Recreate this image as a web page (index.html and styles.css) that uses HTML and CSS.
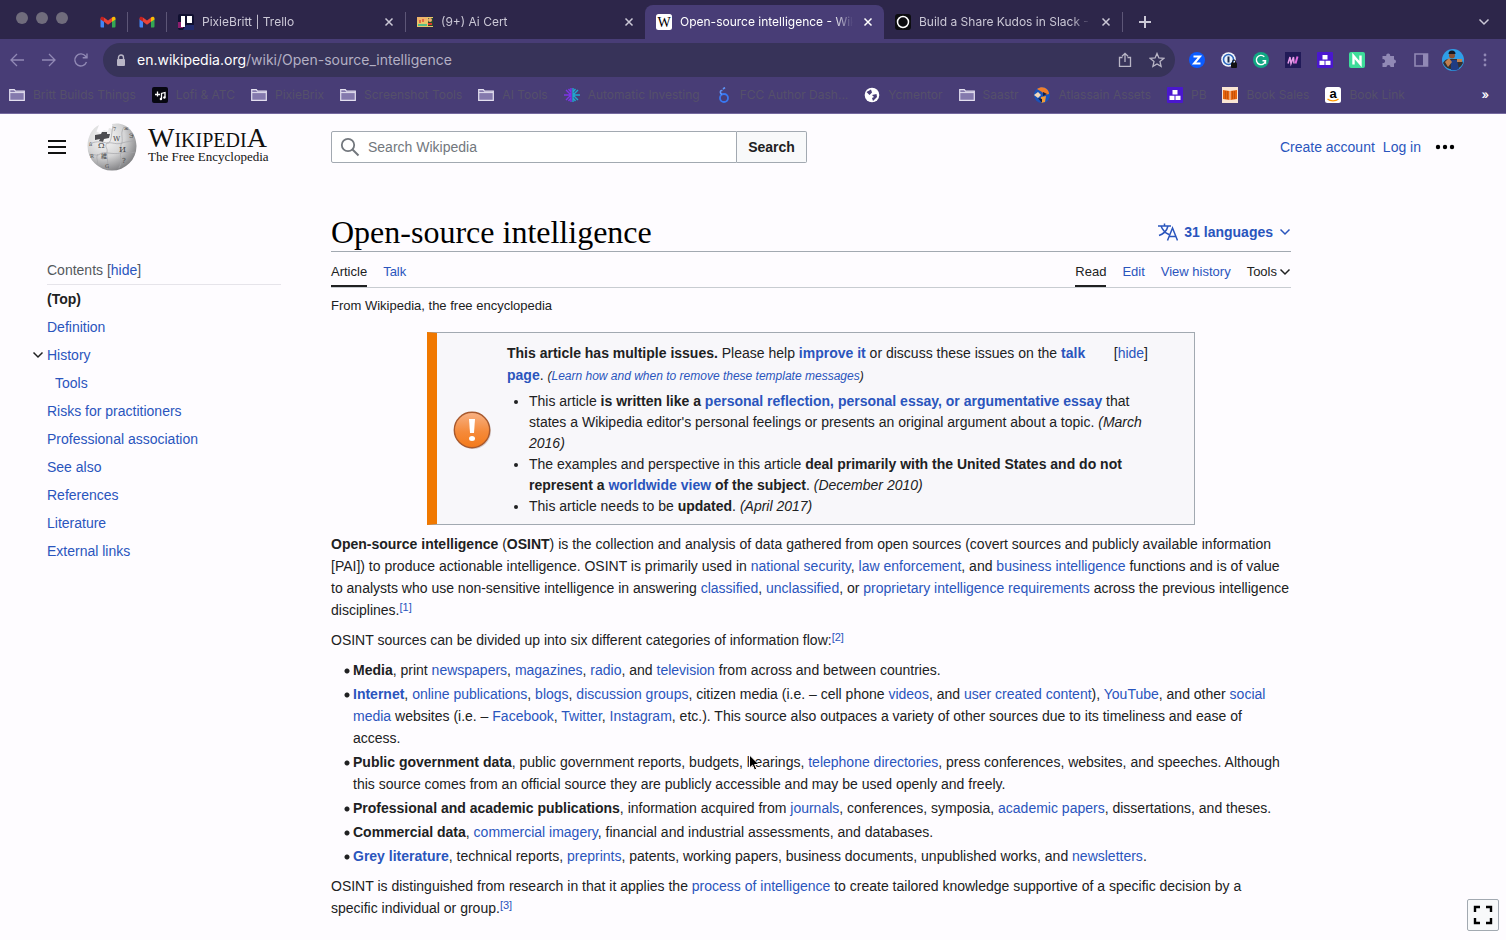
FILE: index.html
```html
<!DOCTYPE html>
<html lang="en">
  <head>
    <meta charset="UTF-8" />
    <meta name="viewport" content="width=device-width, initial-scale=1.0" />
    <title>Open-source intelligence - Wikipedia</title>
    <link rel="stylesheet" href="styles.css">
  </head>
  <body>
    <!-- shared icons -->
    <svg class="defs" width="0" height="0" aria-hidden="true">
      <symbol id="folder" viewBox="0 0 16 16">
        <path d="M.7 13V2.6h4.6l1.2 1.6h8.8V13.3H.7z" fill="#8479ad" stroke="#e4e0f0" stroke-width="1.2"/>
        <path d="M1 5.6h14" stroke="#e4e0f0"/>
      </symbol>
      <symbol id="gmail" viewBox="0 0 16 16">
        <path d="M.5 4.5 4 7v6.5H1.5a1 1 0 0 1-1-1z" fill="#4285f4"/>
        <path d="M15.500 4.500 12 7v6.500h2.500a1 1 0 0 0 1-1z" fill="#34a853"/>
        <path d="M4 3.500 8 6.600l4-3.100v4.200l-4 3-4-3z" fill="#ea4335"/>
        <path d="M12 3.500c1.500-1.400 3.500-.8 3.500 1v1L12 7.800z" fill="#fbbc04"/>
        <path d="M4 3.500C2.500 2.100.5 2.700.5 4.500v1L4 7.800z" fill="#c5221f"/>
      </symbol>
      <symbol id="close" viewBox="0 0 16 16">
        <path d="m4.500 4.500 7 7m0-7-7 7" fill="none" stroke="currentColor" stroke-width="1.500"/>
      </symbol>
      <symbol id="blocks" viewBox="0 0 16 16">
        <rect width="16" height="16" rx="1" fill="#4a17cf"/>
        <path d="M5.500 3h5v4.500h-5zM2.500 8.700h5V13h-5zM8.500 8.700h5V13h-5z" fill="#fff"/>
      </symbol>
      <symbol id="chevron" viewBox="0 0 12 12">
        <path d="m1.500 3.500 4.500 4.500 4.500-4.500" fill="none" stroke="currentColor" stroke-width="1.500"/>
      </symbol>
    </svg>

    <div class="browser">
      <div class="tab-strip">
        <div class="lights"><span></span><span></span><span></span></div>
        <div class="tab pinned"><svg class="icon"><use href="#gmail"/></svg><i class="divider"></i></div>
        <div class="tab pinned"><svg class="icon"><use href="#gmail"/></svg><i class="divider"></i></div>
        <div class="tab">
          <svg class="icon" viewBox="0 0 16 16"><rect width="16" height="16" rx="2" fill="#101030"/><path d="M0 8h5v6H0z" fill="#8d1d6d"/><path d="M8 11h8v5H5z" fill="#222b6c"/><path d="M3 2h4v11H3zM9 2h5v7H9z" fill="#fff"/></svg>
          <span class="tab-title">PixieBritt | Trello</span>
          <button class="tab-close" aria-label="Close tab"><svg class="icon"><use href="#close"/></svg></button>
          <i class="divider"></i>
        </div>
        <div class="tab">
          <svg class="icon" viewBox="0 0 16 16"><path d="M0 3h16v10H0z" fill="#e8c668"/><path d="M0 3h10v4H0z" fill="#f0b56a"/><path d="M11 4h5v8h-5z" fill="#274b2c"/><path d="M1 10h9v2H1z" fill="#54bd86"/><path d="M2 6h2v3H2zM5 5h2v3H5z" fill="#e66a45"/><circle cx="13" cy="6" r="2" fill="#f0b070"/><path d="M11 9h4v2h-4z" fill="#d8352d"/></svg>
          <span class="tab-title">(9+) Ai Cert</span>
          <button class="tab-close" aria-label="Close tab"><svg class="icon"><use href="#close"/></svg></button>
        </div>
        <div class="tab active">
          <svg class="icon" viewBox="0 0 16 16"><rect width="16" height="16" rx="2.500" fill="#fff"/><text x="8" y="13" text-anchor="middle" font-family="Liberation Serif, serif" font-size="14">W</text></svg>
          <span class="tab-title">Open-source intelligence - Wikipedia</span>
          <button class="tab-close" aria-label="Close tab"><svg class="icon"><use href="#close"/></svg></button>
        </div>
        <div class="tab">
          <svg class="icon" viewBox="0 0 16 16"><rect width="16" height="16" rx="3" fill="#0c0c10"/><circle cx="8" cy="8" r="5.500" fill="none" stroke="#fff" stroke-width="1.500"/></svg>
          <span class="tab-title">Build a Share Kudos in Slack - PixieBrix</span>
          <button class="tab-close" aria-label="Close tab"><svg class="icon"><use href="#close"/></svg></button>
          <i class="divider"></i>
        </div>
        <button class="strip-btn" aria-label="New tab"><svg class="icon" viewBox="0 0 16 16"><path d="M8 2v12M2 8h12" stroke="currentColor" stroke-width="2"/></svg></button>
        <button class="strip-btn last" aria-label="Search tabs"><svg class="icon small"><use href="#chevron"/></svg></button>
      </div>

      <div class="toolbar">
        <button class="tool dim" aria-label="Back"><svg class="icon" viewBox="0 0 16 16"><path d="M15 8H2m6-6L2 8l6 6" fill="none" stroke="currentColor" stroke-width="1.300"/></svg></button>
        <button class="tool dim" aria-label="Forward"><svg class="icon" viewBox="0 0 16 16"><path d="M1 8h13M8 2l6 6-6 6" fill="none" stroke="currentColor" stroke-width="1.300"/></svg></button>
        <button class="tool dim" aria-label="Reload"><svg class="icon" viewBox="0 0 16 16"><path d="M13.500 10A6 6 0 1 1 12.600 4.200L14 5.600M14 1.500v4.300H9.700" fill="none" stroke="currentColor" stroke-width="1.400"/></svg></button>
        <div class="omnibox">
          <svg class="lock" viewBox="0 0 10 12"><path d="M2.500 6V3.500a2.500 2.500 0 0 1 5 0V6" fill="none" stroke="#b9b6c6" stroke-width="1.400"/><rect x="1" y="5" width="8" height="7" rx="1" fill="#b9b6c6"/></svg>
          <div class="url" role="textbox" aria-label="Address" contenteditable="true" spellcheck="false"><b>en.wikipedia.org</b>/wiki/Open-source_intelligence</div>
          <button class="tool" aria-label="Share"><svg class="icon" viewBox="0 0 16 16"><path d="M5.500 5.500h-3v8.800h11V5.500h-3M8 10V1.500M5 4.300l3-3 3 3" fill="none" stroke="currentColor" stroke-width="1.300"/></svg></button>
          <button class="tool" aria-label="Bookmark"><svg class="icon" viewBox="0 0 16 16"><path d="m8 1.500 1.900 4.500 4.800.4-3.700 3.200 1.100 4.800L8 11.900l-4.100 2.500L5 9.600 1.300 6.400l4.800-.4z" fill="none" stroke="currentColor" stroke-width="1.300"/></svg></button>
        </div>
        <button class="tool" aria-label="Zoom"><svg class="icon" viewBox="0 0 16 16"><circle cx="8" cy="8" r="8" fill="#0b5cff"/><path d="M4.500 4.500h6.500L5 11.500h6.500" fill="none" stroke="#fff" stroke-width="2"/></svg></button>
        <button class="tool" aria-label="1Password"><svg class="icon" viewBox="0 0 16 16"><circle cx="7.500" cy="7.500" r="7.300" fill="#f4f6fb"/><circle cx="7.500" cy="7.500" r="5" fill="#e8f0fb" stroke="#2c66bd" stroke-width="1.600"/><path d="M7.500 4.500v6" stroke="#1b2b4c" stroke-width="2"/><rect x="10" y="10.500" width="6" height="5.500" rx="1" fill="#111"/><path d="M11.500 11V9.500a1.500 1.500 0 0 1 3 0V11" fill="none" stroke="#111"/></svg></button>
        <button class="tool" aria-label="Grammarly"><svg class="icon" viewBox="0 0 16 16"><circle cx="8" cy="8" r="8" fill="#11a683"/><path d="M11.300 4.800a4.600 4.600 0 1 0 1.200 4H9.500M12.500 8.800v3" fill="none" stroke="#fff" stroke-width="1.400"/></svg></button>
        <button class="tool" aria-label="Mem"><svg class="icon" viewBox="0 0 16 16"><rect width="16" height="16" fill="#211a58"/><path d="M3 11.500 5 5l1 6.500L8.500 5l.5 6.500" fill="none" stroke="#e79be8" stroke-width="1.500"/><path d="M10.500 11.500 12.500 4.500" stroke="#e26ae0" stroke-width="2"/></svg></button>
        <button class="tool" aria-label="PixieBrix"><svg class="icon"><use href="#blocks"/></svg></button>
        <button class="tool" aria-label="Nimbus"><svg class="icon" viewBox="0 0 16 16"><rect width="16" height="16" rx="2" fill="#3ddc9a"/><path d="M4.500 12.500V4l7 8V3.500" fill="none" stroke="#fff" stroke-width="2.400"/></svg></button>
        <button class="tool dim" aria-label="Extensions"><svg class="icon" viewBox="0 0 16 16"><path d="M1.500 4h3.800a2 2 0 1 1 3.800 0H13v3.500a2 2 0 1 1 0 4V15H9.500a2 2 0 1 0-4 0h-4v-4a2 2 0 1 0 0-3.800z" fill="currentColor"/></svg></button>
        <button class="tool dim" aria-label="Side panel"><svg class="icon" viewBox="0 0 16 16"><path d="M2 2h12.500v12H2z" fill="none" stroke="currentColor" stroke-width="1.600"/><path d="M10 2h4v12h-4z" fill="currentColor"/></svg></button>
        <button class="tool" aria-label="Profile"><svg class="avatar" viewBox="0 0 22 22"><circle cx="11" cy="11" r="11" fill="#2f9ee8"/><path d="M1 14c2-4 5-4 7-4h5c4 0 7 1 8 4a11 11 0 0 1-20 0z" fill="#35302f"/><path d="M9 11h6l2 9a11 11 0 0 1-8 1z" fill="#203d83"/><path d="m3 13 4-4 3 4-4 5zM15 10h5v3h-5z" fill="#c08050"/><circle cx="10" cy="6.500" r="3" fill="#8a5234"/><path d="M6.500 5a3.500 3.500 0 0 1 7 0z" fill="#151923"/></svg></button>
        <button class="tool dim" aria-label="Menu"><svg class="icon" viewBox="0 0 16 16" fill="currentColor"><circle cx="8" cy="3" r="1.400"/><circle cx="8" cy="8" r="1.400"/><circle cx="8" cy="13" r="1.400"/></svg></button>
      </div>

      <nav class="bookmarks" aria-label="Bookmarks">
        <a href="#"><svg class="icon"><use href="#folder"/></svg>Britt Builds Things</a>
        <a href="#"><svg class="icon" viewBox="0 0 16 16"><rect width="16" height="16" rx="2" fill="#070710"/><path d="M3 7.500h5M5.500 4.500v5M9.500 12V6.500L13 5.500v5" fill="none" stroke="#fff" stroke-width="1.300"/><circle cx="8.900" cy="12" r="1.200" fill="#fff"/><circle cx="12.400" cy="10.500" r="1.200" fill="#fff"/></svg>Lofi &amp; ATC</a>
        <a href="#"><svg class="icon"><use href="#folder"/></svg>PixieBrix</a>
        <a href="#"><svg class="icon"><use href="#folder"/></svg>Screenshot Tools</a>
        <a href="#"><svg class="icon"><use href="#folder"/></svg>AI Tools</a>
        <a href="#"><svg class="icon" viewBox="0 0 16 16"><path d="M7 1v14M2 3l5 5-5 5M0 8h7M4.500 2 7 5M4.500 14 7 11" fill="none" stroke="#7c35e8" stroke-width="1.400"/><path d="M9 1v14M14 3 9 8l5 5M16 8H9M11.500 2 9 5M11.500 14 9 11" fill="none" stroke="#20a6cf" stroke-width="1.400"/></svg>Automatic Investing</a>
        <a href="#"><svg class="icon" viewBox="0 0 16 16"><circle cx="8" cy="11" r="4" fill="none" stroke="#3978f0" stroke-width="1.800"/><path d="M6 7.500C3.500 6 4 3 6.500 3.500M7 2l2-1.500" fill="none" stroke="#5e93f5" stroke-width="1.600"/></svg>FCC Author Dash...</a>
        <a href="#"><svg class="icon" viewBox="0 0 16 16"><circle cx="8" cy="8" r="7.300" fill="#fff"/><path d="M2.500 5 7 2.500l1 3L5.500 8zM8 8l4.500-1 .5 3-4 4-1-3 2-1z" fill="#483d76"/></svg>Ycmentor</a>
        <a href="#"><svg class="icon"><use href="#folder"/></svg>Saastr</a>
        <a href="#"><svg class="icon" viewBox="0 0 16 16"><circle cx="8" cy="8" r="8" fill="#1a52b8"/><path d="M3 2c6-4 12 0 12 5l-4 1-3-3z" fill="#ef7d2b"/><path d="m0 8 4-3 3 3-3 3z" fill="#f4d9ba"/><path d="m7 10 5-1-1 6-4 1z" fill="#f39a37"/><path d="m4 11 4 1v4zM9 5l4 2-4 2z" fill="#111d42"/></svg>Atlassain Assets</a>
        <a href="#"><svg class="icon"><use href="#blocks"/></svg>PB</a>
        <a href="#"><svg class="icon" viewBox="0 0 16 16"><rect width="16" height="16" fill="#fae6d4"/><path d="m1 3 6.500 1v9L1 12zM15 3 8.500 4v9l6.500-1z" fill="#e8640f"/><path d="M3.500 4v8M5.500 4v8M10.500 4v8M12.500 4v8" stroke="#b84a08" stroke-width=".7"/></svg>Book Sales</a>
        <a href="#"><svg class="icon" viewBox="0 0 16 16"><rect width="16" height="16" rx="2.500" fill="#fff"/><text x="8" y="11" text-anchor="middle" font-family="Liberation Sans, sans-serif" font-size="13" font-weight="700">a</text><path d="M2.500 12c3 2.600 8 2.600 11 0" fill="none" stroke="#f90" stroke-width="1.300"/></svg>Book Link</a>
        <button class="more" aria-label="More bookmarks">»</button>
      </nav>
    </div>

    <div class="page">
      <header class="site-header">
        <div class="brand">
          <button class="menu-btn" aria-label="Main menu"><svg width="20" height="20" viewBox="0 0 20 20"><path d="M1 4h18M1 10h18M1 16h18" stroke="#111" stroke-width="2"/></svg></button>
          <a class="logo" href="#" aria-label="Wikipedia, The Free Encyclopedia">
            <svg class="globe" width="50" height="50" viewBox="0 0 50 50">
              <defs>
                <radialGradient id="ball" cx=".35" cy=".3" r=".75">
                  <stop offset="0" stop-color="#fafafa"/>
                  <stop offset=".55" stop-color="#d4d4d5"/>
                  <stop offset="1" stop-color="#7d7d80"/>
                </radialGradient>
              </defs>
              <path d="M12 3 9.500 9.500 13 11l4-3 4 1 1-3 4 1-1-5c13-3 24 7 24.500 22A24.500 24.500 0 1 1 .5 24C.8 14 5 6.500 12 3z" fill="url(#ball)"/>
              <path d="m8 13 6-1 1-2 5 0v2h3l-1 4-5 1-1 3-4-1 1-2-5 1z" fill="#4c4c50"/>
              <path d="M5 21c5-2 10-1 15 0s4-9 6-17M20 21c6-1 9 2 15 0s9-1 13-3M20 21c-3 4 1 5 0 9s2 9 0 17M2 33c5-2 7 2 11-1s14 1 20-1 10 1 15-1M35 21c-3 3 1 7-1 10s2 8-2 15M35 21c1-7-2-10 2-16M11 32c-3 5 1 6-1 11" fill="none" stroke="#a5a5a9" stroke-width=".7"/>
              <g font-family="DejaVu Serif, serif" font-size="8" fill="#444">
                <text x="11" y="26">Ω</text><text x="26" y="19" font-size="7">W</text><text x="32" y="30">И</text><text x="14" y="36" font-family="Noto Sans CJK JP, sans-serif" font-size="6">維</text><text x="35" y="41" font-size="7">?</text><text x="42" y="16" font-size="6">Э</text><text x="2" y="24" font-size="5">й</text><text x="18" y="46" font-size="5">G</text><text x="26" y="9" font-size="5">7</text><text x="37" y="8" font-size="5">ж</text><text x="3" y="36" font-size="5">R</text>
              </g>
            </svg>
            <span class="logo-text">
              <span class="wordmark">WikipediA</span>
              <span class="tagline">The Free Encyclopedia</span>
            </span>
          </a>
        </div>
        <div class="header-end">
          <form class="search">
            <label class="search-box">
              <svg width="20" height="20" viewBox="0 0 20 20"><circle cx="8" cy="8" r="6.200" fill="none" stroke="#72777d" stroke-width="1.800"/><path d="m12.500 12.500 6 6" stroke="#72777d" stroke-width="2"/></svg>
              <input type="search" placeholder="Search Wikipedia" aria-label="Search Wikipedia">
            </label>
            <button type="button">Search</button>
          </form>
          <nav class="user-links">
            <a href="#">Create account</a>
            <a href="#">Log in</a>
            <button aria-label="Personal tools"><svg width="20" height="20" viewBox="0 0 20 20"><circle cx="3" cy="10" r="2.200"/><circle cx="10" cy="10" r="2.200"/><circle cx="17" cy="10" r="2.200"/></svg></button>
          </nav>
        </div>
      </header>

      <div class="columns">
        <nav class="toc" aria-label="Contents">
          <div class="toc-head">Contents <span class="toggle">[<a href="#">hide</a>]</span></div>
          <ul>
            <li><a class="current" href="#">(Top)</a></li>
            <li><a href="#">Definition</a></li>
            <li class="open">
              <button aria-label="Toggle History subsection"><svg class="icon small"><use href="#chevron"/></svg></button>
              <a href="#">History</a>
              <ul><li><a href="#">Tools</a></li></ul>
            </li>
            <li><a href="#">Risks for practitioners</a></li>
            <li><a href="#">Professional association</a></li>
            <li><a href="#">See also</a></li>
            <li><a href="#">References</a></li>
            <li><a href="#">Literature</a></li>
            <li><a href="#">External links</a></li>
          </ul>
        </nav>

        <main>
          <div class="title-row">
            <h1>Open-source intelligence</h1>
            <button class="languages">
              <svg width="20" height="20" viewBox="0 0 20 20"><path d="M0 4h13M6.500 1.500V4M3 4c1.500 4 4.500 7 8 8.500M10 4c-1 4-4.500 8-9 9.500M9.500 18.500 14.500 6l5 12.500M11.300 14.500h6.400" fill="none" stroke="currentColor" stroke-width="1.500"/></svg>
              31 languages
              <svg class="icon small"><use href="#chevron"/></svg>
            </button>
          </div>
          <div class="page-tabs">
            <a class="selected" href="#">Article</a>
            <a href="#">Talk</a>
            <a class="selected push" href="#">Read</a>
            <a href="#">Edit</a>
            <a href="#">View history</a>
            <button>Tools <svg class="icon small"><use href="#chevron"/></svg></button>
          </div>
          <div class="subtitle">From Wikipedia, the free encyclopedia</div>

          <div class="ambox">
            <svg width="40" height="40" viewBox="0 0 40 40">
              <defs>
                <linearGradient id="warn" x1="0" y1="0" x2="0" y2="1">
                  <stop offset="0" stop-color="#f8b285"/>
                  <stop offset=".55" stop-color="#f58a3a"/>
                  <stop offset="1" stop-color="#f47a1a"/>
                </linearGradient>
              </defs>
              <circle cx="21" cy="21" r="18" fill="#d5ced0"/>
              <circle cx="20" cy="20" r="17.700" fill="url(#warn)" stroke="#a8592d" stroke-width="1.400"/>
              <path d="M17 9h6l-1 14h-4z" fill="#fff"/>
              <ellipse cx="20" cy="28.500" rx="3" ry="2.500" fill="#fff"/>
            </svg>
            <div class="ambox-text">
              <span class="ambox-hide">[<a href="#">hide</a>]</span>
              <b>This article has multiple issues.</b> Please help <b><a href="#">improve it</a></b> or discuss these issues on the <b><a href="#">talk page</a></b>. <small>(<a href="#">Learn how and when to remove these template messages</a>)</small>
              <ul>
                <li>This article <b>is written like a <a href="#">personal reflection, personal essay, or argumentative essay</a></b> that states a Wikipedia editor's personal feelings or presents an original argument about a topic. <i>(March 2016)</i></li>
                <li>The examples and perspective in this article <b>deal primarily with the United States and do not represent a <a href="#">worldwide view</a> of the subject</b>. <i>(December 2010)</i></li>
                <li>This article needs to be <b>updated</b>. <i>(April 2017)</i></li>
              </ul>
            </div>
          </div>

          <div class="article">
            <p><b>Open-source intelligence</b> (<b>OSINT</b>) is the collection and analysis of data gathered from open sources (covert sources and publicly available information [PAI]) to produce actionable intelligence. OSINT is primarily used in <a href="#">national security</a>, <a href="#">law enforcement</a>, and <a href="#">business intelligence</a> functions and is of value to analysts who use non-sensitive intelligence in answering <a href="#">classified</a>, <a href="#">unclassified</a>, or <a href="#">proprietary intelligence requirements</a> across the previous intelligence disciplines.<sup><a href="#">[1]</a></sup></p>
            <p>OSINT sources can be divided up into six different categories of information flow:<sup><a href="#">[2]</a></sup></p>
            <ul>
              <li><b>Media</b>, print <a href="#">newspapers</a>, <a href="#">magazines</a>, <a href="#">radio</a>, and <a href="#">television</a> from across and between countries.</li>
              <li><b><a href="#">Internet</a></b>, <a href="#">online publications</a>, <a href="#">blogs</a>, <a href="#">discussion groups</a>, citizen media (i.e. – cell phone <a href="#">videos</a>, and <a href="#">user created content</a>), <a href="#">YouTube</a>, and other <a href="#">social media</a> websites (i.e. – <a href="#">Facebook</a>, <a href="#">Twitter</a>, <a href="#">Instagram</a>, etc.). This source also outpaces a variety of other sources due to its timeliness and ease of access.</li>
              <li><b>Public government data</b>, public government reports, budgets, hearings, <a href="#">telephone directories</a>, press conferences, websites, and speeches. Although this source comes from an official source they are publicly accessible and may be used openly and freely.</li>
              <li><b>Professional and academic publications</b>, information acquired from <a href="#">journals</a>, conferences, symposia, <a href="#">academic papers</a>, dissertations, and theses.</li>
              <li><b>Commercial data</b>, <a href="#">commercial imagery</a>, financial and industrial assessments, and databases.</li>
              <li><b><a href="#">Grey literature</a></b>, technical reports, <a href="#">preprints</a>, patents, working papers, business documents, unpublished works, and <a href="#">newsletters</a>.</li>
            </ul>
            <p>OSINT is distinguished from research in that it applies the <a href="#">process of intelligence</a> to create tailored knowledge supportive of a specific decision by a specific individual or group.<sup><a href="#">[3]</a></sup></p>
          </div>
        </main>
      </div>
    </div>

    <button class="width-toggle" aria-label="Toggle limited content width"><svg width="20" height="20" viewBox="0 0 20 20"><path d="M2 7V2h5M13 2h5v5M18 13v5h-5M7 18H2v-5" fill="none" stroke="#000" stroke-width="2.400"/></svg></button>
    <svg class="pointer" width="13" height="18" viewBox="0 0 13 18" aria-hidden="true"><path d="M1.500 1v13l3-2.800 2 4.800 2.200-1-2-4.500H11z" fill="#000" stroke="#fff"/></svg>
  </body>
</html>
```

FILE: styles.css
```css
* {
  box-sizing: border-box;
}
body {
  margin: 0;
  background: #fefcff;
  color: #202122;
  font-family: "Liberation Sans", Arial, sans-serif;
  font-size: 14px;
  line-height: 22px;
}
a {
  color: #2a55bd;
  text-decoration: none;
}
button {
  display: flex;
  align-items: center;
  justify-content: center;
  border: none;
  padding: 0;
  background: none;
  color: inherit;
  font: inherit;
  cursor: pointer;
}
ul {
  margin: 0;
  padding: 0;
}
svg {
  flex: none;
}
.defs {
  position: absolute;
}
.icon {
  width: 16px;
  height: 16px;
}
.icon.small {
  width: 12px;
  height: 12px;
}

/* browser window */
.browser {
  background: #483d76;
  border-bottom: 1px solid #75699f;
  font-family: Inter, Roboto, sans-serif;
  font-size: 12px;
}
.tab-strip {
  display: flex;
  height: 39px;
  padding-top: 5px;
  background: #2d264a;
  color: #cbc8d6;
}
.lights {
  display: flex;
  gap: 8px;
  width: 89px;
  padding: 7px 0 0 16px;
}
.lights span {
  width: 12px;
  height: 12px;
  border-radius: 50%;
  background: #706c7c;
}
.tab {
  display: flex;
  align-items: center;
  flex: 0 1 239px;
  min-width: 0;
  padding-left: 11px;
  border-radius: 8px 8px 0 0;
}
.tab.pinned {
  flex: none;
  width: 39px;
}
.tab.active {
  background: #483d76;
  color: #fff;
}
.tab-title {
  flex: 1;
  margin: 0 7px 0 8px;
  overflow: hidden;
  white-space: nowrap;
  mask-image: linear-gradient(to left, transparent, #000 20px);
}
.tab-close {
  margin-right: 8px;
}
.divider {
  width: 1px;
  height: 20px;
  margin-left: auto;
  background: #5d5677;
}
.strip-btn {
  width: 44px;
}
.strip-btn.last {
  margin-left: auto;
}
.toolbar {
  display: flex;
  align-items: center;
  height: 42px;
  padding: 0 5px 0 1px;
  color: #b9b6c6;
}
.tool {
  flex: none;
  width: 32px;
  height: 32px;
}
.tool.dim {
  color: #9189b5;
}
.avatar {
  width: 22px;
  height: 22px;
}
.omnibox {
  display: flex;
  align-items: center;
  flex: 1;
  height: 34px;
  margin: 0 6px;
  padding: 0 2px 0 13px;
  border-radius: 17px;
  background: #373359;
}
.lock {
  width: 10px;
  height: 12px;
}
.url {
  flex: 1;
  margin-left: 11px;
  color: #b3b0c4;
  font-size: 14px;
}
.url b {
  color: #fff;
  font-weight: 400;
}
.bookmarks {
  display: flex;
  align-items: center;
  gap: 16px;
  height: 32px;
  padding: 0 17px 4px 9px;
  white-space: nowrap;
}
.bookmarks a {
  display: flex;
  align-items: center;
  gap: 8px;
  color: #55506a;
}
.more {
  margin-left: auto;
  color: #fff;
  font-weight: 600;
}

/* site header */
.page {
  padding: 0 51px 0 47px;
}
.site-header,
.columns {
  display: grid;
  grid-template-columns: 234px minmax(0, 1fr);
  column-gap: 50px;
}
.site-header {
  align-items: center;
  height: 66px;
}
.brand,
.logo,
.header-end,
.user-links {
  display: flex;
  align-items: center;
}
.brand {
  gap: 20px;
}
.logo {
  gap: 11px;
  color: #111;
  font-family: "Liberation Serif", serif;
}
.logo-text {
  display: flex;
  flex-direction: column;
  padding-bottom: 4px;
}
.wordmark {
  font-size: 28px;
  font-variant: small-caps;
  line-height: 24px;
}
.tagline {
  font-size: 13px;
  line-height: 14px;
}
.header-end {
  justify-content: space-between;
}
.search {
  display: flex;
  flex: 0 1 476px;
  height: 32px;
}
.search-box {
  display: flex;
  align-items: center;
  flex: 1;
  gap: 8px;
  padding-left: 8px;
  border: 1px solid #a2a9b1;
  border-radius: 2px 0 0 2px;
  background: #fff;
}
.search input {
  flex: 1;
  min-width: 0;
  border: none;
  padding: 0;
  outline: none;
  background: none;
  font: inherit;
}
.search input::placeholder {
  color: #72777d;
}
.search button {
  width: 70px;
  border: 1px solid #a2a9b1;
  border-left: none;
  border-radius: 0 2px 2px 0;
  background: #f8f9fa;
  font-weight: 700;
}
.user-links {
  gap: 8px;
}
.user-links button {
  margin-left: 6px;
}

/* contents */
.toc {
  padding-top: 79px;
}
.toc-head {
  padding-bottom: 3px;
  border-bottom: 1px solid #e6e4ea;
  color: #54595d;
}
.toc ul {
  list-style: none;
}
.toc li {
  position: relative;
  line-height: 28px;
}
.toc li li {
  padding-left: 8px;
}
.toc .current {
  color: #202122;
  font-weight: 700;
}
.toc .open button {
  position: absolute;
  top: 8px;
  left: -15px;
}

/* article */
main {
  max-width: 960px;
  padding-top: 32px;
}
.title-row {
  display: flex;
  justify-content: space-between;
  height: 40px;
  border-bottom: 1px solid #a2a9b1;
}
h1 {
  margin: 0;
  color: #000;
  font-family: "Liberation Serif", serif;
  font-size: 32px;
  font-weight: 400;
  line-height: 40px;
}
.languages {
  gap: 6px;
  color: #2a55bd;
  font-weight: 700;
}
.page-tabs {
  display: flex;
  gap: 16px;
  height: 36px;
  border-bottom: 1px solid #c8ccd1;
  font-size: 13px;
}
.page-tabs a,
.page-tabs button {
  padding-top: 9px;
}
.page-tabs .selected {
  border-bottom: 2px solid #202122;
  color: #202122;
}
.page-tabs .push {
  margin-left: auto;
}
.page-tabs button {
  align-items: flex-start;
  gap: 2px;
}
.page-tabs svg {
  margin-top: 5px;
}
.subtitle {
  margin: 8px 0 16px;
  font-size: 13px;
  line-height: 20px;
}
.ambox {
  display: flex;
  align-items: center;
  gap: 15px;
  margin: 0 10%;
  padding: 9px 46px 7px 15px;
  border: 1px solid #a2a9b1;
  border-left: 10px solid #f07800;
  background: #f8f7fa;
}
.ambox-text {
  flex: 1;
}
.ambox-hide {
  float: right;
  margin-left: 24px;
}
.ambox small {
  font-size: 12px;
  font-style: italic;
}
.ambox ul {
  margin: 4px 0 0 22px;
  line-height: 21px;
}
.article p {
  margin: 8px 0;
}
.article ul {
  margin: 8px 0 8px 13px;
  list-style: none;
}
.article li {
  margin-bottom: 2px;
  padding-left: 9px;
  background: radial-gradient(circle at 3px 12px, #202122 2px, transparent 3px);
}
sup {
  font-size: 11px;
  line-height: 1;
  vertical-align: 4px;
}

/* floating over the page */
.width-toggle {
  position: fixed;
  right: 7px;
  bottom: 9px;
  width: 32px;
  height: 32px;
  border: 1px solid #a2a9b1;
  border-radius: 2px;
  background: #f8f9fa;
}
.pointer {
  position: absolute;
  top: 754px;
  left: 748px;
}
```
